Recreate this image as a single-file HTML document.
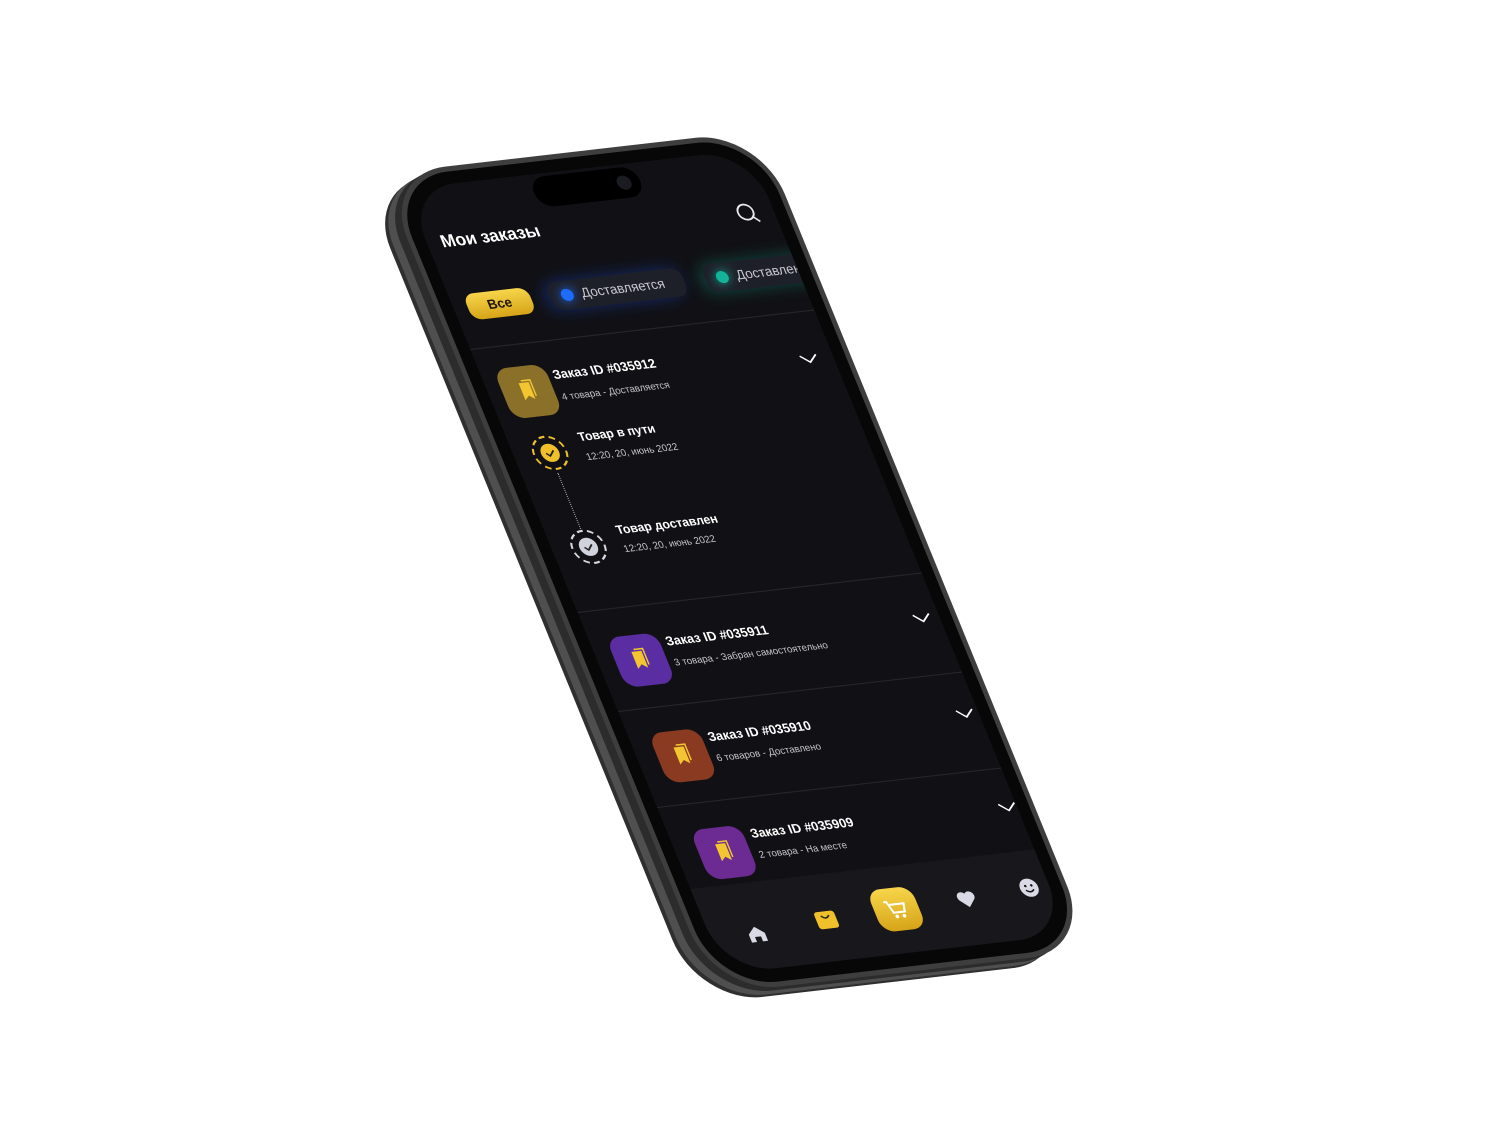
<!DOCTYPE html>
<html><head><meta charset="utf-8"><style>
*{margin:0;padding:0;box-sizing:border-box}
body{width:1500px;height:1125px;background:#fff;overflow:hidden;position:relative;font-family:"Liberation Sans","DejaVu Sans",sans-serif}
#w{position:absolute;left:0;top:0;width:1px;height:1px;transform:matrix(1,-0.115,0.408,1,0,0);transform-origin:0 0}
.a{position:absolute}
.body{left:296px;top:208px;width:378px;height:820px;border-radius:64px;background:#070707;border:5px solid #3d3e3d;box-shadow:-8px 3px 0 #2b2c2b,-16px 6px 0 #4e4f4e,-20px 8px 0 #2e2f2e}
.scr{left:313px;top:225px;width:344px;height:785px;border-radius:50px;background:#111115;overflow:hidden}
.t{position:absolute;white-space:nowrap;color:#fff}
.ic{position:absolute;width:50px;height:50px;border-radius:13px;display:flex;align-items:center;justify-content:center}
.ln{position:absolute;left:0;width:356px;height:1px;background:#26262c}
.h1{font-size:12.5px;font-weight:bold}
.h2{font-size:9.5px;color:#c4c4cc}
</style></head><body>
<div id="w">
 <div class="a" style="left:280px;top:470px;width:10px;height:40px;border-radius:5px;background:#3f403f"></div>
 <div class="a" style="left:280px;top:525px;width:10px;height:70px;border-radius:5px;background:#3f403f"></div>
 <div class="a" style="left:280px;top:610px;width:10px;height:70px;border-radius:5px;background:#3f403f"></div>
 <div class="a body"></div>
 <div class="a scr">
  <div class="a" style="left:122px;top:3px;width:106px;height:30px;border-radius:15px;background:#000"></div>
  <div class="a" style="left:205px;top:11px;width:14px;height:14px;border-radius:7px;background:#1a1c22"></div>
  <div class="t" style="left:14px;top:45px;font-size:17px;font-weight:bold">Мои заказы</div>
  <svg class="a" style="left:306px;top:49px" width="24" height="24" viewBox="0 0 24 24" fill="none" stroke="#e8e8ee" stroke-width="1.8"><circle cx="10.5" cy="10.5" r="7.5"/><path d="M16 16l5 5"/></svg>
  <div class="a" style="left:14px;top:107px;width:64px;height:26px;border-radius:10px;background:linear-gradient(#f7d54a,#d6a418);color:#1b1405;font-size:13px;font-weight:bold;text-align:center;line-height:26px">Все</div>
  <div class="a" style="left:97px;top:105px;width:134px;height:28px;border-radius:10px;background:#1e2029;box-shadow:-4px 0 16px rgba(30,90,255,.35)"></div>
  <div class="a" style="left:108px;top:113px;width:12px;height:12px;border-radius:6px;background:#1c6cff;box-shadow:0 0 10px #1c6cff"></div>
  <div class="t" style="left:128px;top:111px;font-size:13px;color:#c8c8d2">Доставляется</div>
  <div class="a" style="left:252px;top:105px;width:134px;height:28px;border-radius:10px;background:#1e2029;box-shadow:-4px 0 16px rgba(20,200,170,.3)"></div>
  <div class="a" style="left:263px;top:113px;width:12px;height:12px;border-radius:6px;background:#13b39a;box-shadow:0 0 10px #13b39a"></div>
  <div class="t" style="left:283px;top:111px;font-size:13px;color:#c8c8d2">Доставлено</div>
  <div class="ln" style="top:160px"></div>

  <div class="ic" style="left:14px;top:182px;background:#8a7028"><svg width="22" height="24" viewBox="0 0 22 24"><path d="M5 3h10v17l-5-4-5 4z" fill="#f2c531"/><path d="M8 1h9v16" fill="none" stroke="#f2c531" stroke-width="1.5"/></svg></div>
  <div class="t h1" style="left:69px;top:187px">Заказ ID #035912</div>
  <div class="t h2" style="left:69px;top:211px">4 товара - Доставляется</div>
  <svg class="a" style="left:311px;top:202px" width="18" height="10"><path d="M1 1l8 7 8-7" fill="none" stroke="#fff" stroke-width="1.6"/></svg>

  <svg class="a" style="left:18px;top:250px" width="36" height="36"><circle cx="18" cy="18" r="16" fill="none" stroke="#f0c02a" stroke-width="2" stroke-dasharray="6 4"/><circle cx="18" cy="18" r="9" fill="#f0c02a"/><path d="M14 18l3 3 5-5" fill="none" stroke="#222" stroke-width="1.6"/></svg>
  <div class="t h1" style="left:69px;top:249px;font-size:12px">Товар в пути</div>
  <div class="t h2" style="left:69px;top:271px">12:20, 20, июнь 2022</div>
  <div class="a" style="left:35px;top:288px;width:0;height:56px;border-left:1.5px dotted #aaa"></div>
  <svg class="a" style="left:18px;top:344px" width="36" height="36"><circle cx="18" cy="18" r="16" fill="none" stroke="#d8d8e0" stroke-width="2" stroke-dasharray="6 4"/><circle cx="18" cy="18" r="9" fill="#d0d2dc"/><path d="M14 18l3 3 5-5" fill="none" stroke="#222" stroke-width="1.6"/></svg>
  <div class="t h1" style="left:69px;top:342px;font-size:12px">Товар доставлен</div>
  <div class="t h2" style="left:69px;top:363px">12:20, 20, июнь 2022</div>
  <div class="ln" style="top:423px"></div>

  <div class="ic" style="left:17px;top:451px;background:#5a2ea2"><svg width="22" height="24" viewBox="0 0 22 24"><path d="M5 3h10v17l-5-4-5 4z" fill="#f2c531"/><path d="M8 1h9v16" fill="none" stroke="#f2c531" stroke-width="1.5"/></svg></div>
  <div class="t h1" style="left:73px;top:454px">Заказ ID #035911</div>
  <div class="t h2" style="left:73px;top:477px">3 товара - Забран самостоятельно</div>
  <svg class="a" style="left:318px;top:462px" width="18" height="10"><path d="M1 1l8 7 8-7" fill="none" stroke="#fff" stroke-width="1.6"/></svg>
  <div class="ln" style="top:522px"></div>

  <div class="ic" style="left:20px;top:547px;background:#8b3a22"><svg width="22" height="24" viewBox="0 0 22 24"><path d="M5 3h10v17l-5-4-5 4z" fill="#f2c531"/><path d="M8 1h9v16" fill="none" stroke="#f2c531" stroke-width="1.5"/></svg></div>
  <div class="t h1" style="left:76px;top:550px">Заказ ID #035910</div>
  <div class="t h2" style="left:76px;top:573px">6 товаров - Доставлено</div>
  <svg class="a" style="left:322px;top:558px" width="18" height="10"><path d="M1 1l8 7 8-7" fill="none" stroke="#fff" stroke-width="1.6"/></svg>
  <div class="ln" style="top:618px"></div>

  <div class="ic" style="left:22px;top:644px;background:#6b2b93"><svg width="22" height="24" viewBox="0 0 22 24"><path d="M5 3h10v17l-5-4-5 4z" fill="#f2c531"/><path d="M8 1h9v16" fill="none" stroke="#f2c531" stroke-width="1.5"/></svg></div>
  <div class="t h1" style="left:79px;top:647px">Заказ ID #035909</div>
  <div class="t h2" style="left:79px;top:670px">2 товара - На месте</div>
  <svg class="a" style="left:326px;top:652px" width="18" height="10"><path d="M1 1l8 7 8-7" fill="none" stroke="#fff" stroke-width="1.6"/></svg>

  <div class="a" style="left:0;top:700px;width:356px;height:90px;background:#17171c"></div>
  <svg class="a" style="left:36px;top:740px" width="20" height="20" viewBox="0 0 20 20"><path d="M2 10L10 3l8 7v8h-5v-5H7v5H2z" fill="#d9dae6"/></svg>
  <div class="a" style="left:108px;top:736px;width:20px;height:17px;border-radius:3px;background:#f0c02a"></div>
  <svg class="a" style="left:112px;top:739px" width="12" height="6"><path d="M2 1q4 5 8 0" fill="none" stroke="#222" stroke-width="1.5"/></svg>
  <div class="a" style="left:167px;top:721px;width:44px;height:42px;border-radius:13px;background:linear-gradient(#f7d54a,#d6a418)"></div>
  <svg class="a" style="left:177px;top:730px" width="24" height="24" viewBox="0 0 24 24"><path d="M2 4h3l3 11h11l2-8H7" fill="none" stroke="#fff" stroke-width="2"/><circle cx="10" cy="19" r="1.8" fill="#fff"/><circle cx="17" cy="19" r="1.8" fill="#fff"/></svg>
  <svg class="a" style="left:250px;top:730px" width="20" height="20" viewBox="0 0 20 20"><path d="M10 18L2.5 10.5A4.5 4.5 0 0 1 10 4.5a4.5 4.5 0 0 1 7.5 6z" fill="#d9dae6"/></svg>
  <svg class="a" style="left:314px;top:726px" width="20" height="20" viewBox="0 0 20 20"><circle cx="10" cy="10" r="9" fill="#d9dae6"/><circle cx="7" cy="8" r="1.2" fill="#111"/><circle cx="13" cy="8" r="1.2" fill="#111"/><path d="M6 12q4 4 8 0" fill="none" stroke="#111" stroke-width="1.4"/></svg>
 </div>
</div>
</body></html>
